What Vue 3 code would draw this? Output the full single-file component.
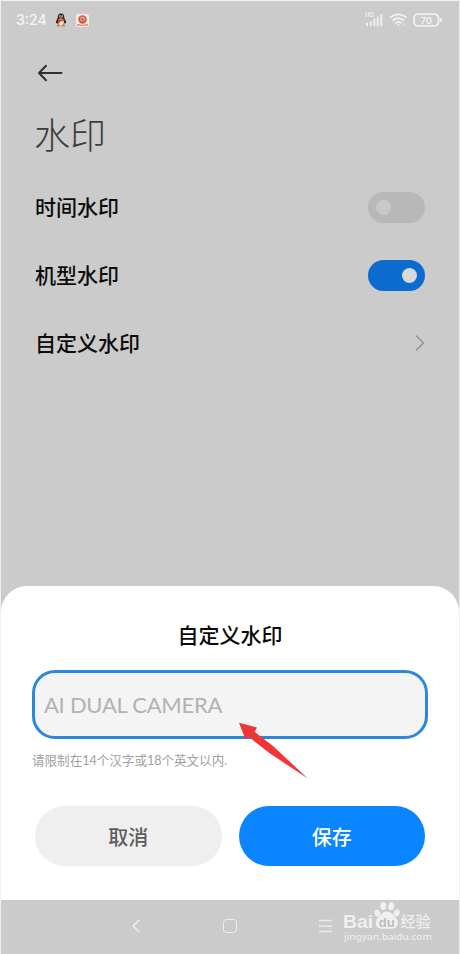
<script setup>
import { ref } from 'vue'

const timeMark = ref(false)
const modelMark = ref(true)
const markText = ref('')
</script>

<template>
  <div class="phone">
    <header class="status">
      <span class="clock">3:24</span>
      <svg class="penguin" viewBox="0 0 12 14">
        <path d="M6 .5C3.500.5 2.600 2.400 2.700 5 1.800 6.400.6 8.400 1 10.300c.5.3 1-.3 1.200-.8.2 1 .6 1.600 1 2.100h5.600c.4-.5.8-1.100 1-2.100.2.5.7 1.100 1.200.8.4-1.900-.8-3.900-1.700-5.300C9.400 2.400 8.500.5 6 .5z" fill="#282522" />
        <ellipse cx="6" cy="9" rx="2.900" ry="3.200" fill="#f0eee9" />
        <circle cx="4.900" cy="3.100" r=".8" fill="#eee" />
        <circle cx="7.100" cy="3.100" r=".8" fill="#eee" />
        <ellipse cx="6" cy="4.900" rx="2" ry=".7" fill="#d89a32" />
        <path d="M2.600 5.800q3.400 1.600 6.800 0v1.600q-3.400 1.300-4.500.9v2H3.100V7.500z" fill="#d33a2c" />
        <path d="M2 12q2-1.200 3.700.6L5 13.500H2zM10 12q-2-1.200-3.700.6l.7.9h3z" fill="#c98b2e" />
      </svg>
      <svg class="app-badge" viewBox="0 0 13 13">
        <rect width="13" height="13" rx="2" fill="#f8ebe4" />
        <circle cx="6.500" cy="5.500" r="4.200" fill="#c95840" />
        <path d="M1 10q5.500 1.500 11 0l-.5 1.800h-10z" fill="#d97a60" />
        <circle cx="6.500" cy="5" r="2.500" fill="#e7a58d" />
        <path d="M5 4.500h3L6.500 7z" fill="#bd4632" />
      </svg>
      <svg class="signals" viewBox="0 0 82 20">
        <text class="hd" x="1" y="7">HD</text>
        <g fill="#efefef">
          <rect x="2" y="12.500" width="2" height="3.500" rx=".6" />
          <rect x="5.800" y="11" width="2" height="5" rx=".6" />
          <rect x="9.300" y="8.500" width="2" height="7.500" rx=".6" />
          <rect x="12.700" y="6.500" width="2" height="9.500" rx=".6" />
          <rect x="16.200" y="4" width="2.200" height="12" rx=".6" />
        </g>
        <g fill="none" stroke="#efefef" stroke-width="2">
          <path d="M26 7.600Q34.300 1 42.600 7.600" />
          <path d="M28.600 10.500Q34.300 6 40 10.500" />
          <path d="M31.200 13.200Q34.300 10.900 37.400 13.200" />
        </g>
        <path d="M32.700 14.300h3.200l-1.600 2.100z" fill="#efefef" />
        <path d="M39.500 12v4m-1.300-1.500 1.300 1.500 1.300-1.500" fill="none" stroke="#e4e4e4" stroke-width=".8" />
        <rect x="50" y="4.200" width="24.500" height="11.600" rx="3.800" fill="none" stroke="#f2f2f2" stroke-width="1.800" />
        <path d="M76.500 8q2 2 0 4z" fill="#f2f2f2" stroke="#f2f2f2" />
        <text class="battery" x="62.300" y="13.500">70</text>
      </svg>
    </header>

    <main class="settings">
      <svg class="back" viewBox="0 0 26 18">
        <path d="M24.500 9H2M9 1.700 2 9 9 16.300" fill="none" stroke="#303030" stroke-width="2" stroke-linecap="round" stroke-linejoin="round" />
      </svg>
      <h1>水印</h1>
      <div class="row">
        <span>时间水印</span>
        <button class="switch" :class="{ on: timeMark }" @click="timeMark = !timeMark"><i /></button>
      </div>
      <div class="row">
        <span>机型水印</span>
        <button class="switch" :class="{ on: modelMark }" @click="modelMark = !modelMark"><i /></button>
      </div>
      <div class="row">
        <span>自定义水印</span>
        <svg class="chevron" viewBox="0 0 10 18">
          <path d="m1.500 2.200 7 6.800-7 6.800" fill="none" stroke="#989898" stroke-width="1.700" stroke-linecap="round" stroke-linejoin="round" />
        </svg>
      </div>
    </main>

    <section class="sheet">
      <h2>自定义水印</h2>
      <input v-model="markText" class="field" placeholder="AI DUAL CAMERA" />
      <p class="hint">请限制在14个汉字或18个英文以内.</p>
      <div class="actions">
        <button class="btn">取消</button>
        <button class="btn primary">保存</button>
      </div>
      <svg class="pointer" viewBox="0 0 72 58">
        <path d="M2 .8 20 5.500 17.500 9.700 36 24 70.800 56.500 33 31.500 12 15 8.500 17.500z" fill="#f13434" />
      </svg>
    </section>

    <footer class="nav">
      <svg class="nav-back" viewBox="0 0 8 14">
        <path d="M7 1 1.200 7 7 13" fill="none" stroke="#efefef" stroke-width="1.500" />
      </svg>
      <span class="nav-home" />
      <svg class="nav-menu" viewBox="0 0 13 14">
        <path d="M0 1.500h13M0 7h13M0 12.500h13" stroke="#ececec" stroke-width="1.300" />
      </svg>
      <svg class="brand" viewBox="0 0 94 44">
        <g fill="#f0f0f0">
          <text class="brand-name" x="0" y="27.500" textLength="30" lengthAdjust="spacingAndGlyphs">Bai</text>
          <ellipse cx="34.300" cy="13.300" rx="2.900" ry="3.700" transform="rotate(-15 34.300 13.300)" />
          <ellipse cx="40.300" cy="6" rx="3" ry="4" />
          <ellipse cx="48.300" cy="6.300" rx="3" ry="4" transform="rotate(10 48.300 6.300)" />
          <ellipse cx="53.700" cy="13" rx="2.900" ry="3.700" transform="rotate(20 53.700 13)" />
          <path d="M43.800 11.500c4.800 0 6 3.500 9 6.500 4.200 4.500 1.700 10.800-4 10.800h-10c-5.700 0-8.200-6.300-4-10.800C37.800 15 39 11.500 43.800 11.500z" />
          <text class="brand-cn" x="57.500" y="26.500" textLength="30">经验</text>
          <text class="brand-url" x="1" y="39.500" textLength="88" lengthAdjust="spacingAndGlyphs">jingyan.baidu.com</text>
        </g>
        <text class="brand-du" x="43.700" y="26.500">du</text>
      </svg>
    </footer>
  </div>
</template>

<style>
body {
  margin: 0;
  background: #f5f5f5;
}
</style>

<style scoped>
* {
  box-sizing: border-box;
}

.phone {
  width: 460px;
  height: 954px;
  padding: 1px 1px 0;
  display: flex;
  flex-direction: column;
  overflow: hidden;
  background: linear-gradient(#f0f0f0 0 1px, transparent 1px), linear-gradient(90deg, #f0f0f0 1px, #cbcbcb 1px 459px, #f0f0f0 459px);
  font-family: Lato, "Noto Sans CJK SC", sans-serif;
}

h1,
h2,
p {
  margin: 0;
  font-weight: 400;
}

button {
  border: 0;
  font-family: inherit;
}

svg {
  display: block;
  flex: none;
}

.status {
  height: 38px;
  padding: 0 15px;
  display: flex;
  align-items: center;
}

.clock {
  width: 39px;
  color: #f5f5f5;
  font: 500 14px/20px Inter, sans-serif;
}

.penguin {
  width: 12px;
  height: 14px;
}

.app-badge {
  width: 13px;
  height: 13px;
  margin-left: 9px;
}

.signals {
  width: 82px;
  height: 20px;
  margin-left: auto;
  margin-right: -2px;
}

.hd {
  fill: #eee;
  font: 600 6px Inter, sans-serif;
}

.battery {
  fill: #f2f2f2;
  font: 600 9.500px Inter, sans-serif;
  text-anchor: middle;
}

.settings {
  height: 547px;
  padding: 25px 34px 0 33px;
}

.back {
  width: 26px;
  height: 18px;
  margin-left: 3px;
}

h1 {
  height: 52px;
  margin-top: 27px;
  margin-bottom: 12px;
  color: #3d3d3d;
  font-size: 36px;
  font-weight: 300;
  line-height: 52px;
}

.row {
  height: 68px;
  padding-left: 1px;
  display: flex;
  align-items: center;
  justify-content: space-between;
  color: #0c0c0c;
  font-size: 21px;
  font-weight: 500;
}

.row span {
  padding-bottom: 3px;
}

.switch {
  width: 57px;
  height: 31px;
  padding: 0 8px;
  display: flex;
  align-items: center;
  border-radius: 16px;
  background: #b8b8b8;
}

.switch i {
  width: 15px;
  height: 15px;
  border-radius: 50%;
  background: #c9c9c9;
}

.switch.on {
  justify-content: flex-end;
  background: #0b6bcf;
}

.switch.on i {
  background: #d8d8d8;
}

.chevron {
  width: 10px;
  height: 18px;
}

.sheet {
  position: relative;
  height: 314px;
  padding: 33px 31px 0;
  border-radius: 26px 26px 0 0;
  background: #fff;
}

h2 {
  color: #0a0a0a;
  font-size: 21px;
  font-weight: 500;
  line-height: 32px;
  text-align: center;
}

.field {
  display: block;
  width: 396px;
  height: 69px;
  margin-top: 19px;
  padding: 0 9px;
  border: 3px solid #2b87dc;
  border-radius: 23px;
  outline: 0;
  background: #f4f4f4;
  color: #222;
  font: 400 22px Lato, "Noto Sans CJK SC", sans-serif;
  letter-spacing: -0.270px;
}

.field::placeholder {
  color: #b2b2b2;
  opacity: 1;
}

.hint {
  margin-top: 11px;
  color: #a0a0a0;
  font-size: 12.550px;
  line-height: 22px;
}

.actions {
  display: flex;
  gap: 17px;
  margin-top: 34px;
  padding: 0 3px;
}

.btn {
  flex: 1;
  height: 60px;
  border-radius: 30px;
  background: #efefef;
  color: #5d5d5d;
  font-size: 20px;
  font-weight: 500;
}

.btn.primary {
  background: #0b84ff;
  color: #fff;
}

.pointer {
  position: absolute;
  left: 236px;
  top: 136px;
  width: 72px;
  height: 58px;
}

.nav {
  height: 54px;
  padding: 0 0 2px 131px;
  display: flex;
  align-items: center;
}

.nav-back {
  width: 8px;
  height: 14px;
}

.nav-home {
  width: 14px;
  height: 14px;
  margin-left: 83px;
  border: 1.500px solid #efefef;
  border-radius: 3.500px;
}

.nav-menu {
  width: 13px;
  height: 14px;
  margin-left: 82px;
}

.brand {
  width: 94px;
  height: 44px;
  margin-left: 11px;
  align-self: flex-start;
}

.brand-name {
  font: 700 19px "Liberation Sans", sans-serif;
}

.brand-cn {
  font: 500 15px "Noto Sans CJK SC", sans-serif;
}

.brand-url {
  font: 400 9px "Noto Sans", sans-serif;
}

.brand-du {
  fill: #bcbcbc;
  font: 700 13px "Liberation Sans", sans-serif;
  text-anchor: middle;
}
</style>
